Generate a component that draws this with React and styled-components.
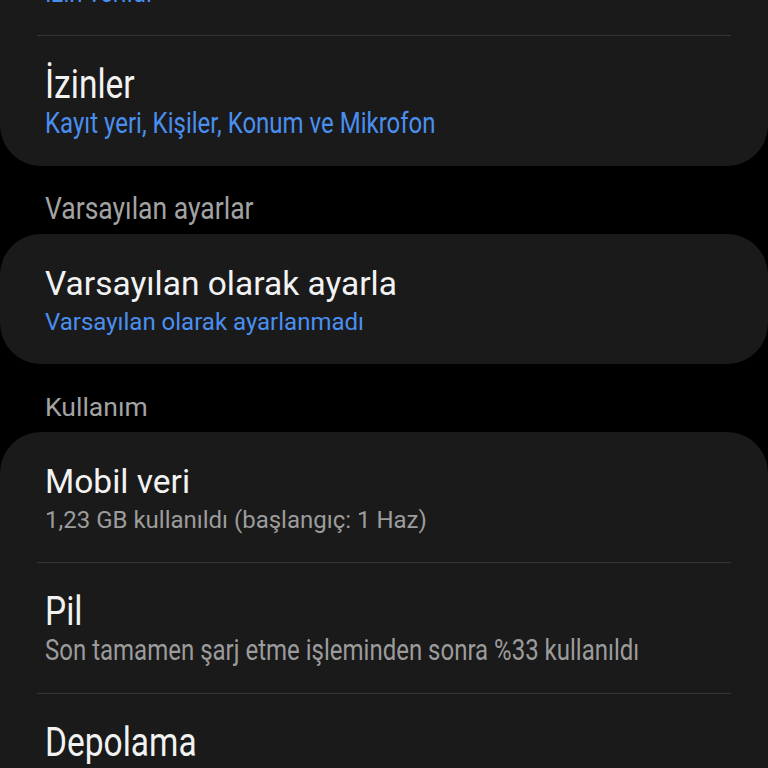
import styled, { createGlobalStyle } from 'styled-components'

const GlobalStyle = createGlobalStyle`
  html, body {
    margin: 0;
    padding: 0;
    background: #000;
  }
  body {
    font-family: Roboto, "Noto Sans", sans-serif;
    -webkit-font-smoothing: antialiased;
  }
`

const sections = [
  {
    header: null,
    rows: [
      { title: 'Bildirimler', sub: 'İzin verildi', tone: 'blue', tall: true },
      { title: 'İzinler', sub: 'Kayıt yeri, Kişiler, Konum ve Mikrofon', tone: 'blue', tall: true }
    ]
  },
  {
    header: { text: 'Varsayılan ayarlar', tall: true },
    rows: [
      { title: 'Varsayılan olarak ayarla', sub: 'Varsayılan olarak ayarlanmadı', tone: 'blue' }
    ]
  },
  {
    header: { text: 'Kullanım' },
    rows: [
      { title: 'Mobil veri', sub: '1,23 GB kullanıldı (başlangıç: 1 Haz)', tone: 'gray' },
      { title: 'Pil', sub: 'Son tamamen şarj etme işleminden sonra %33 kullanıldı', tone: 'gray', tall: true },
      { title: 'Depolama', sub: '1,02 GB dahili depolama alanında kullanıldı', tone: 'gray', tall: true }
    ]
  }
]

const App = () => (
  <>
    <GlobalStyle />
    <Page>
      {sections.map((section, k) => (
        <Section key={k}>
          {section.header && (
            <SectionHeader>
              <Stretch $tall={section.header.tall}>{section.header.text}</Stretch>
            </SectionHeader>
          )}
          <Card>
            {section.rows.map((row, i) => (
              <Row key={i}>
                <Title><Stretch $tall={row.tall}>{row.title}</Stretch></Title>
                <Sub $tone={row.tone}><Stretch $tall={row.tall}>{row.sub}</Stretch></Sub>
              </Row>
            ))}
          </Card>
        </Section>
      ))}
    </Page>
  </>
)

const Page = styled.div`
  margin-top: -95px;
  height: 863px;
  overflow: hidden;
`

const Section = styled.div``

const SectionHeader = styled.div`
  padding: 28px 45px 10px;
  font-size: 26.5px;
  line-height: 30px;
  color: #a3a3a3;
`

const Stretch = styled.span`
  display: inline-block;
  transform: ${p => (p.$tall ? 'scaleY(1.2)' : 'none')};
  transform-origin: 50% 60%;
  white-space: nowrap;
`

const Card = styled.div`
  background: #1a1a1a;
  border-radius: 41px;
  overflow: hidden;
`

const Row = styled.div`
  position: relative;
  padding: 30px 45px 24px;
  height: 76px;

  & + & {
    border-top: 1px solid #343434;
    margin: 0 37px;
    padding-left: 8px;
    padding-right: 8px;
  }
`

const Title = styled.div`
  font-size: 33.5px;
  line-height: 40px;
  color: #f2f2f2;
`

const Sub = styled.div`
  font-size: 24px;
  line-height: 36px;
  color: ${p => (p.$tone === 'blue' ? '#4a8ff0' : '#9c9c9c')};
`

export default App
